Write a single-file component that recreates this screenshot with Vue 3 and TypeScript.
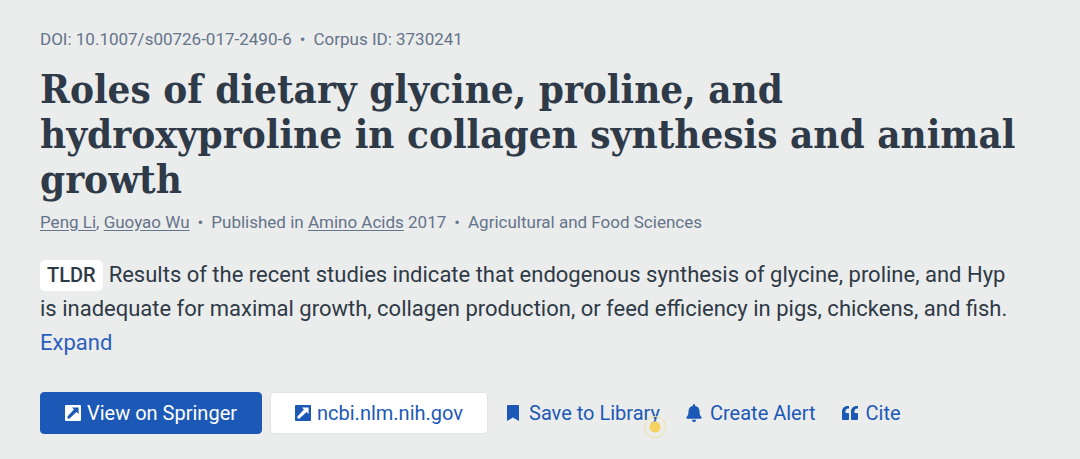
<script setup lang="ts">
interface Action {
  label: string
  icon: 'bookmark' | 'bell' | 'quote'
  hint?: boolean
}

const actions: Action[] = [
  { label: 'Save to Library', icon: 'bookmark', hint: true },
  { label: 'Create Alert', icon: 'bell' },
  { label: 'Cite', icon: 'quote' },
]
</script>

<template>
  <main class="paper">
    <ul class="meta">
      <li>DOI: 10.1007/s00726-017-2490-6</li>
      <li>Corpus ID: 3730241</li>
    </ul>
    <h1>Roles of dietary glycine, proline, and hydroxyproline in collagen synthesis and animal growth</h1>
    <ul class="meta">
      <li><a href="#">Peng Li</a>, <a href="#">Guoyao Wu</a></li>
      <li>Published in <a href="#">Amino Acids</a> 2017</li>
      <li>Agricultural and Food Sciences</li>
    </ul>
    <p class="summary">
      <span class="tldr">TLDR</span>Results of the recent studies indicate that endogenous synthesis of glycine, proline, and Hyp is inadequate for maximal growth, collagen production, or feed efficiency in pigs, chickens, and fish.
      <button type="button" class="expand">Expand</button>
    </p>
    <div class="actions">
      <a href="#" class="source primary">
        <svg class="icon" viewBox="0 0 16 16" aria-hidden="true">
          <path fill="currentColor" fill-rule="evenodd" d="M1 0h14a1 1 0 0 1 1 1v14a1 1 0 0 1-1 1H1a1 1 0 0 1-1-1V1a1 1 0 0 1 1-1zM7 2.500l1.900 1.900L2.300 11.800v.8l1.100 1.100h.8l7.400-6.600 2 1.900V2.500z" />
        </svg>
        <span>View on Springer</span>
      </a>
      <a href="#" class="source">
        <svg class="icon" viewBox="0 0 16 16" aria-hidden="true">
          <path fill="currentColor" fill-rule="evenodd" d="M1 0h14a1 1 0 0 1 1 1v14a1 1 0 0 1-1 1H1a1 1 0 0 1-1-1V1a1 1 0 0 1 1-1zM7 2.500l1.900 1.900L2.300 11.800v.8l1.100 1.100h.8l7.400-6.600 2 1.900V2.500z" />
        </svg>
        <span>ncbi.nlm.nih.gov</span>
      </a>
      <button v-for="action in actions" :key="action.label" type="button" class="action">
        <svg v-if="action.icon === 'bookmark'" class="icon" viewBox="0 0 16 16" aria-hidden="true">
          <path fill="currentColor" d="M3 0h10a1 1 0 0 1 1 1v15l-6-3.500L2 16V1a1 1 0 0 1 1-1z" />
        </svg>
        <svg v-else-if="action.icon === 'bell'" class="icon" viewBox="0 0 16 18" aria-hidden="true">
          <path fill="currentColor" d="M8 0a1 1 0 0 1 1 1v.7c2.500.5 4.500 2.600 4.500 5.300 0 3.500.6 4.500 1.900 6 .6.700.2 1.700-.8 1.700H1.400c-1 0-1.400-1-.8-1.700C1.900 11.500 2.500 10.500 2.500 7c0-2.700 2-4.800 4.500-5.300V1a1 1 0 0 1 1-1zM5.800 15.800h4.400a2.200 2.200 0 0 1-4.400 0z" />
        </svg>
        <svg v-else class="icon" viewBox="0 0 16 16" aria-hidden="true">
          <path fill="currentColor" d="M7 1v2.500h-.8C4.700 3.500 3.500 4.700 3.500 6.200V8H6a1 1 0 0 1 1 1v5a1 1 0 0 1-1 1H1a1 1 0 0 1-1-1V6.500C0 3.400 2.400 1 5.500 1zM16 1v2.500h-.8c-1.500 0-2.700 1.200-2.700 2.700V8H15a1 1 0 0 1 1 1v5a1 1 0 0 1-1 1h-5a1 1 0 0 1-1-1V6.500C9 3.400 11.400 1 14.500 1z" />
        </svg>
        <span>{{ action.label }}</span>
        <i v-if="action.hint" class="beacon"></i>
      </button>
    </div>
  </main>
</template>

<style>
body {
  background: #ebecec;
}
</style>

<style scoped>
.paper {
  padding: 28px 40px 24px;
  font-family: Roboto, "Liberation Sans", sans-serif;
  color: #2e3a46;
}
.meta {
  display: flex;
  flex-wrap: wrap;
  margin: 0;
  padding: 0;
  list-style: none;
  font-size: 17px;
  line-height: 22px;
  color: #64748a;
}
.meta li + li::before {
  content: "•";
  margin: 0 8px;
}
.meta a {
  color: inherit;
  text-underline-offset: 2px;
}
h1 {
  margin: 16px 0 10px;
  font-family: "Roboto Slab", "DejaVu Serif Condensed", "DejaVu Serif", serif;
  font-size: 40px;
  line-height: 45px;
  font-weight: 700;
  color: #2f3a48;
}
.summary {
  margin: 25px 0 32px;
  padding-right: 24px;
  font-size: 22px;
  line-height: 34px;
}
.tldr {
  display: inline-block;
  margin-right: 6px;
  padding: 0 7px;
  border-radius: 5px;
  background: #fff;
  font-size: 20px;
  line-height: 31px;
  font-weight: 500;
}
.expand {
  display: block;
  padding: 0;
  border: 0;
  background: none;
  font: inherit;
  color: #2b5fbd;
}
.actions {
  display: flex;
  align-items: center;
  flex-wrap: wrap;
  gap: 8px;
  font-size: 20px;
  line-height: 24px;
}
.source,
.action {
  display: flex;
  align-items: center;
  gap: 8px;
  color: #1c59b6;
  text-decoration: none;
}
.source {
  gap: 6px;
  padding: 8px 24px;
  border: 1px solid #e1e3e4;
  border-radius: 4px;
  background: #fff;
}
.primary {
  border-color: #1c59b6;
  background: #1c59b6;
  color: #fff;
}
.action {
  position: relative;
  padding: 8px 9px;
  border: 0;
  background: none;
  font: inherit;
}
.icon {
  width: 16px;
  height: 18px;
  flex: none;
}
.beacon {
  position: absolute;
  right: 3px;
  bottom: -5px;
  box-sizing: border-box;
  width: 22px;
  height: 22px;
  border: 1px solid #f2e2a5;
  border-radius: 50%;
  background: radial-gradient(circle, #f6d260 5px, transparent 6px);
}
</style>
